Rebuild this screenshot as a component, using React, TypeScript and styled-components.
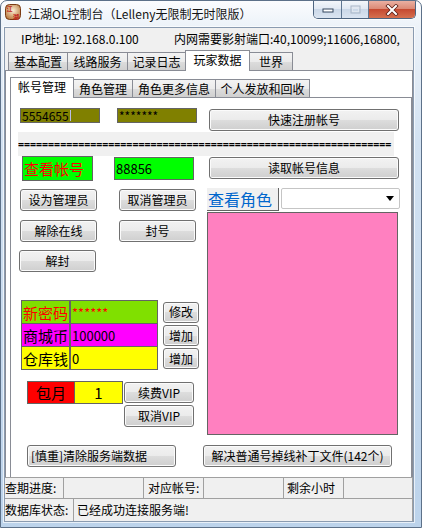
import React from "react";
import styled, { createGlobalStyle } from "styled-components";

const FONT = `"Noto Sans CJK SC", "Noto Sans", "DejaVu Sans", sans-serif`;
const EDGE = "#646464";
const TABLINE = "#898c95";

const GlobalStyle = createGlobalStyle`
  * { box-sizing: border-box; }
  html, body { margin: 0; padding: 0; }
  body {
    width: 422px; height: 528px; overflow: hidden; background: #ffffff;
    font-family: ${FONT}; font-size: 12px; color: #000;
  }
`;

const Window = styled.div`
  width: 422px;
  height: 528px;
  display: flex;
  flex-direction: column;
  border: 1px solid #5d7189;
  border-radius: 7px 7px 0 0;
  background: linear-gradient(180deg, #fbfcfe 0px, #edf3f9 24px, #d3e2f2 140px, #bcd3eb 100%);
  overflow: hidden;
`;

const TitleBar = styled.div`
  height: 26px;
  flex-shrink: 0;
  display: flex;
  align-items: flex-start;
  padding: 0 5px 0 4px;
`;

const AppIcon = styled.svg`
  width: 16px;
  height: 16px;
  margin-top: 3px;
  flex-shrink: 0;
`;

const TitleText = styled.div`
  margin: 5px 0 0 7px;
  font-size: 12px;
  line-height: 16px;
  color: #141414;
  white-space: nowrap;
`;

const CaptionGroup = styled.div`
  margin-left: auto;
  display: flex;
  height: 18px;
  border: 1px solid #4e6580;
  border-top: none;
  border-radius: 0 0 5px 5px;
  overflow: hidden;
  box-shadow: 0 1px 0 rgba(255, 255, 255, 0.8);
`;

const CaptionBtn = styled.div<{ $w: number; $close?: boolean }>`
  width: ${(p) => p.$w}px;
  height: 100%;
  display: flex;
  align-items: center;
  justify-content: center;
  background: ${(p) =>
    p.$close
      ? "linear-gradient(180deg,#eab0a2 0%,#dc8a76 45%,#c64a31 50%,#d5704f 100%)"
      : "linear-gradient(180deg,#f3f6fa 0%,#e1e9f3 45%,#cbd8e8 50%,#dbe5f1 100%)"};
  & + & {
    border-left: 1px solid #5f7792;
  }
`;

const Client = styled.div`
  flex: 1;
  min-height: 0;
  margin: 0 7px 5px 3px;
  display: flex;
  flex-direction: column;
  background: #f0f0f0;
  border: 1px solid #8a9bb0;
  box-shadow: 0 0 0 1px rgba(255, 255, 255, 0.65);
`;

const InfoRow = styled.div`
  height: 22px;
  flex-shrink: 0;
  display: flex;
  align-items: center;
  padding: 0 0 1px 16px;
  font-size: 12px;
  line-height: 14px;
  white-space: nowrap;
`;

const InfoItem = styled.span<{ $w?: number }>`
  width: ${(p) => (p.$w ? `${p.$w}px` : "auto")};
  flex-shrink: 0;
`;

const TabStrip = styled.div<{ $pl: number; $h: number }>`
  height: ${(p) => p.$h}px;
  flex-shrink: 0;
  display: flex;
  align-items: flex-end;
  padding-left: ${(p) => p.$pl}px;
`;

const Tab = styled.div<{ $w: number; $active?: boolean }>`
  width: ${(p) => p.$w}px;
  height: ${(p) => (p.$active ? 21 : 18)}px;
  margin-bottom: ${(p) => (p.$active ? -1 : 0)}px;
  margin-right: -1px;
  position: relative;
  z-index: ${(p) => (p.$active ? 2 : 1)};
  border: 1px solid ${TABLINE};
  border-bottom: none;
  background: ${(p) =>
    p.$active
      ? "#ffffff"
      : "linear-gradient(180deg,#f3f3f3 0%,#ebebeb 50%,#dddddd 50%,#d0d0d0 100%)"};
  display: flex;
  align-items: center;
  justify-content: center;
  padding-bottom: ${(p) => (p.$active ? 2 : 0)}px;
  font-size: 12px;
  line-height: 14px;
  white-space: nowrap;
`;

const OuterPage = styled.div`
  flex: 1;
  min-height: 0;
  display: flex;
  flex-direction: column;
  background: #ffffff;
  border: 1px solid ${TABLINE};
  border-bottom: none;
  padding: 6px 0 0 4px;
`;

const InnerPage = styled.div`
  flex: 1;
  min-height: 0;
  display: flex;
  flex-direction: column;
  background: #ffffff;
  border: 1px solid ${TABLINE};
  border-bottom: none;
  padding: 10px 0 0 9px;
`;

const Row = styled.div<{ $mt?: number; $ml?: number }>`
  display: flex;
  align-items: flex-start;
  flex-shrink: 0;
  margin-top: ${(p) => p.$mt ?? 0}px;
  margin-left: ${(p) => p.$ml ?? 0}px;
`;

const Btn = styled.button<{
  $w: number;
  $h?: number;
  $ml?: number;
  $mt?: number;
  $left?: boolean;
}>`
  width: ${(p) => p.$w}px;
  height: ${(p) => p.$h ?? 22}px;
  margin: ${(p) => p.$mt ?? 0}px 0 0 ${(p) => p.$ml ?? 0}px;
  flex-shrink: 0;
  padding: ${(p) => (p.$left ? "0 0 0 3px" : "0")};
  display: flex;
  align-items: center;
  justify-content: ${(p) => (p.$left ? "flex-start" : "center")};
  border: 1px solid #707070;
  border-radius: 3px;
  background: linear-gradient(180deg, #f2f2f2 0%, #ebebeb 50%, #dddddd 50%, #cfcfcf 100%);
  box-shadow: inset 0 0 0 1px #fbfbfb;
  font-family: ${FONT};
  font-size: 12px;
  line-height: 14px;
  color: #000;
  white-space: nowrap;
  cursor: default;
`;

const ColorBox = styled.div<{
  $bg: string;
  $w: number;
  $h: number;
  $fg?: string;
  $fs?: number;
  $ml?: number;
  $mt?: number;
  $center?: boolean;
  $noTop?: boolean;
  $noLeft?: boolean;
}>`
  width: ${(p) => p.$w}px;
  height: ${(p) => p.$h}px;
  margin: ${(p) => p.$mt ?? 0}px 0 0 ${(p) => p.$ml ?? 0}px;
  flex-shrink: 0;
  background: ${(p) => p.$bg};
  color: ${(p) => p.$fg ?? "#000"};
  font-size: ${(p) => p.$fs ?? 13}px;
  line-height: 1;
  border: 1px solid ${EDGE};
  border-top-width: ${(p) => (p.$noTop ? 0 : 1)}px;
  border-left-width: ${(p) => (p.$noLeft ? 0 : 1)}px;
  display: flex;
  align-items: center;
  justify-content: ${(p) => (p.$center ? "center" : "flex-start")};
  padding-left: ${(p) => (p.$center ? 0 : 1)}px;
  overflow: hidden;
  white-space: nowrap;
`;

const Caret = styled.span`
  display: inline-block;
  width: 1px;
  height: 11px;
  margin-left: 1px;
  background: #b9bde8;
`;

const Separator = styled.div`
  width: 376px;
  height: 24px;
  margin: 1px 0 0 -2px;
  flex-shrink: 0;
  background: #f0f0f0;
  display: flex;
  align-items: center;
  overflow: hidden;
  white-space: nowrap;
  font-family: "DejaVu Sans Mono", monospace;
  font-size: 10px;
  font-weight: bold;
  color: #000;
`;

const Lower = styled.div`
  display: flex;
  align-items: flex-start;
  flex-shrink: 0;
`;

const LeftCol = styled.div`
  width: 187px;
  flex-shrink: 0;
  display: flex;
  flex-direction: column;
`;

const FieldGrid = styled.div`
  margin: 28px 0 0 1px;
  display: grid;
  grid-template-columns: 49px 88px 41px;
  grid-template-rows: 24px 23px 23px;
  align-items: center;
`;

const GridBtnCell = styled.div`
  display: flex;
  justify-content: flex-end;
`;

const VipRow = styled.div`
  margin: 11px 0 0 7px;
  display: flex;
  align-items: flex-start;
`;

const VipBtns = styled.div`
  margin-left: 1px;
  display: flex;
  flex-direction: column;
  gap: 2px;
`;

const RightCol = styled.div`
  margin-top: 7px;
  display: flex;
  flex-direction: column;
`;

const RoleHead = styled.div`
  display: flex;
  align-items: flex-start;
`;

const RoleLabel = styled.div`
  width: 72px;
  height: 23px;
  background: #f0f0f0;
  border-right: 1px solid ${EDGE};
  border-bottom: 1px solid ${EDGE};
  color: #0066cc;
  font-size: 16px;
  line-height: 1;
  display: flex;
  align-items: center;
  padding: 0 0 0 1px;
  overflow: hidden;
  white-space: nowrap;
`;

const Combo = styled.div`
  width: 119px;
  height: 21px;
  margin-left: 2px;
  background: #ffffff;
  border: 1px solid #c5c5c5;
  border-radius: 2px;
  display: flex;
  align-items: center;
  justify-content: flex-end;
  padding-right: 5px;
`;

const PinkPanel = styled.div`
  width: 191px;
  height: 223px;
  margin-top: 1px;
  background: #ff80c0;
  border: 1px solid ${EDGE};
`;

const StatusRow = styled.div<{ $h: number }>`
  height: ${(p) => p.$h}px;
  flex-shrink: 0;
  display: flex;
  border-top: 1px solid #a0a0a0;
  background: #f0f0f0;
`;

const StatusCell = styled.div<{ $w?: number; $pl?: number }>`
  ${(p) => (p.$w ? `width: ${p.$w}px; flex-shrink: 0;` : "flex: 1;")}
  border-right: 1px solid #a0a0a0;
  display: flex;
  align-items: center;
  padding-left: ${(p) => p.$pl ?? 3}px;
  font-size: 12px;
  line-height: 14px;
  white-space: nowrap;
`;

const outerTabs = [
  { t: "基本配置", w: 60 },
  { t: "线路服务", w: 61 },
  { t: "记录日志", w: 59 },
  { t: "玩家数据", w: 65, a: true },
  { t: "世界", w: 44 },
];

const innerTabs = [
  { t: "帐号管理", w: 64, a: true },
  { t: "角色管理", w: 60 },
  { t: "角色更多信息", w: 84 },
  { t: "个人发放和回收", w: 95 },
];

const fields = [
  { label: "新密码", bg: "#80e000", fg: "#ff0000", value: "******", btn: "修改" },
  { label: "商城币", bg: "#ff00ff", fg: "#000000", value: "100000", btn: "增加" },
  { label: "仓库钱", bg: "#ffff00", fg: "#000000", value: "0", btn: "增加" },
];

export default function App() {
  return (
    <>
      <GlobalStyle />
      <Window>
        <TitleBar>
          <AppIcon viewBox="0 0 16 16">
            <defs>
              <radialGradient id="ig" cx="50%" cy="40%" r="65%">
                <stop offset="0" stopColor="#fbefd6" />
                <stop offset="1" stopColor="#b8763a" />
              </radialGradient>
            </defs>
            <rect x="0.5" y="0.5" width="15" height="15" rx="4" fill="url(#ig)" stroke="#7a3b14" />
            <text x="1.5" y="7" fontSize="6" fill="#c0231b" fontWeight="bold">江</text>
            <text x="8" y="14.5" fontSize="6" fill="#c0231b" fontWeight="bold">湖</text>
          </AppIcon>
          <TitleText>江湖OL控制台（Lelleny无限制无时限版）</TitleText>
          <CaptionGroup>
            <CaptionBtn $w={27}>
              <svg width="12" height="6" viewBox="0 0 12 6">
                <rect x="1" y="2" width="10" height="3" fill="#ffffff" stroke="#34475e" strokeWidth="1" />
              </svg>
            </CaptionBtn>
            <CaptionBtn $w={27}>
              <svg width="11" height="9" viewBox="0 0 11 9">
                <rect x="1" y="1" width="9" height="7" fill="none" stroke="#a9b6c6" strokeWidth="1" />
                <rect x="2.5" y="3" width="6" height="3.5" fill="none" stroke="#dfe6ee" strokeWidth="1" />
              </svg>
            </CaptionBtn>
            <CaptionBtn $w={47} $close>
              <svg width="14" height="12" viewBox="0 0 14 12">
                <path d="M3 2 L11 10 M11 2 L3 10" stroke="#5a1f16" strokeWidth="3.6" strokeLinecap="square" />
                <path d="M3 2 L11 10 M11 2 L3 10" stroke="#ffffff" strokeWidth="2" strokeLinecap="square" />
              </svg>
            </CaptionBtn>
          </CaptionGroup>
        </TitleBar>

        <Client>
          <InfoRow>
            <InfoItem $w={153}>IP地址: 192.168.0.100</InfoItem>
            <InfoItem>内网需要影射端口:40,10099;11606,16800,</InfoItem>
          </InfoRow>

          <TabStrip $pl={3} $h={20}>
            {outerTabs.map((t) => (
              <Tab key={t.t} $w={t.w} $active={t.a}>
                {t.t}
              </Tab>
            ))}
          </TabStrip>

          <OuterPage>
            <TabStrip $pl={0} $h={20}>
              {innerTabs.map((t) => (
                <Tab key={t.t} $w={t.w} $active={t.a}>
                  {t.t}
                </Tab>
              ))}
            </TabStrip>

            <InnerPage>
              <Row>
                <ColorBox $bg="#808000" $w={80} $h={15} $fs={12}>
                  5554655
                  <Caret />
                </ColorBox>
                <ColorBox $bg="#808000" $w={80} $h={15} $ml={17} $fs={12}>
                  *******
                </ColorBox>
                <Btn $w={190} $ml={12} $mt={1}>
                  快速注册帐号
                </Btn>
              </Row>

              <Separator>{"=".repeat(62)}</Separator>

              <Row>
                <ColorBox $bg="#00ff00" $w={71} $h={25} $ml={2} $fg="#ff0000" $fs={15}>
                  查看帐号
                </ColorBox>
                <ColorBox $bg="#00ff00" $w={80} $h={23} $ml={21} $mt={1}>
                  88856
                </ColorBox>
                <Btn $w={190} $ml={15} $mt={1}>
                  读取帐号信息
                </Btn>
              </Row>

              <Lower>
                <LeftCol>
                  <Row $mt={8}>
                    <Btn $w={77}>设为管理员</Btn>
                    <Btn $w={77} $ml={22}>
                      取消管理员
                    </Btn>
                  </Row>
                  <Row $mt={9}>
                    <Btn $w={77}>解除在线</Btn>
                    <Btn $w={77} $ml={22}>
                      封号
                    </Btn>
                  </Row>
                  <Row $mt={8} $ml={-1}>
                    <Btn $w={77}>解封</Btn>
                  </Row>

                  <FieldGrid>
                    {fields.map((f, i) => (
                      <React.Fragment key={f.label}>
                        <ColorBox
                          $bg={f.bg}
                          $w={49}
                          $h={i === 0 ? 24 : 23}
                          $fg={f.fg}
                          $fs={15}
                          $noTop={i > 0}
                        >
                          {f.label}
                        </ColorBox>
                        <ColorBox
                          $bg={f.bg}
                          $w={88}
                          $h={i === 0 ? 24 : 23}
                          $fg={f.fg}
                          $fs={13}
                          $noTop={i > 0}
                        >
                          {f.value}
                        </ColorBox>
                        <GridBtnCell>
                          <Btn $w={36} $h={21}>
                            {f.btn}
                          </Btn>
                        </GridBtnCell>
                      </React.Fragment>
                    ))}
                  </FieldGrid>

                  <VipRow>
                    <ColorBox $bg="#ff0000" $w={48} $h={23} $fs={15} $center>
                      包月
                    </ColorBox>
                    <ColorBox $bg="#ffff00" $w={48} $h={23} $fs={15} $center $noLeft>
                      1
                    </ColorBox>
                    <VipBtns>
                      <Btn $w={70} $h={21} $mt={1}>
                        续费VIP
                      </Btn>
                      <Btn $w={70} $h={22}>
                        取消VIP
                      </Btn>
                    </VipBtns>
                  </VipRow>
                </LeftCol>

                <RightCol>
                  <RoleHead>
                    <RoleLabel>查看角色</RoleLabel>
                    <Combo>
                      <svg width="8" height="5" viewBox="0 0 8 5">
                        <polygon points="0,0 8,0 4,5" fill="#000000" />
                      </svg>
                    </Combo>
                  </RoleHead>
                  <PinkPanel />
                </RightCol>
              </Lower>

              <Row $mt={10}>
                <Btn $w={149} $ml={7} $left>
                  [慎重]清除服务端数据
                </Btn>
                <Btn $w={189} $ml={27}>
                  解决普通号掉线补丁文件(142个)
                </Btn>
              </Row>
            </InnerPage>
          </OuterPage>

          <StatusRow $h={21}>
            <StatusCell $w={59} $pl={0}>
              查期进度:
            </StatusCell>
            <StatusCell $w={80} />
            <StatusCell $w={60} $pl={4}>
              对应帐号:
            </StatusCell>
            <StatusCell $w={80} />
            <StatusCell $w={60}>剩余小时</StatusCell>
            <StatusCell />
          </StatusRow>
          <StatusRow $h={23}>
            <StatusCell $w={69} $pl={0}>
              数据库状态:
            </StatusCell>
            <StatusCell>已经成功连接服务端!</StatusCell>
          </StatusRow>
        </Client>
      </Window>
    </>
  );
}
